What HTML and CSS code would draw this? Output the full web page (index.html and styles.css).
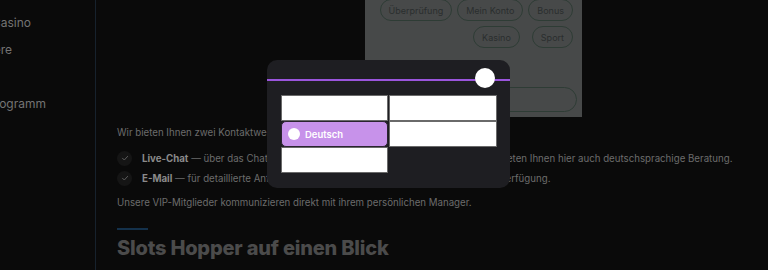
FILE: index.html
```html
<!DOCTYPE html>
<html lang="de">
<head>
<meta charset="utf-8">
<title>Slots Hopper</title>
<link rel="stylesheet" href="styles.css">
</head>
<body>
<div class="page">
  <aside class="sidebar">
    <ul class="nav">
      <li class="nav-item n1">Casino</li>
      <li class="nav-item n2">Turniere</li>
      <li class="nav-item n3">VIP</li>
      <li class="nav-item n4">Treueprogramm</li>
    </ul>
  </aside>
  <main class="main">
    <div class="top">
      <div class="panel">
        <div class="pill-row">
          <span class="pill">Überprüfung</span>
          <span class="pill">Mein Konto</span>
          <span class="pill">Bonus</span>
        </div>
        <div class="pill-row row2">
          <span class="pill">Kasino</span>
          <span class="pill">Sport</span>
        </div>
        <div class="search"></div>
      </div>
    </div>
    <section class="content">
      <p class="intro">Wir bieten Ihnen zwei Kontaktwege an, die beide auf Deutsch verfügbar sind:</p>
      <ul class="checks">
        <li><span class="check"><svg viewBox="0 0 14 14" width="14" height="14"><path d="M4.5 7.2l1.8 1.8 3.3-3.6" fill="none" stroke="#5c5c5c" stroke-width="1" stroke-linecap="round" stroke-linejoin="round"/></svg></span><span><b>Live-Chat</b> — über das Chat-Fenster rund um die Uhr; die Support-Mitarbeiter bieten Ihnen hier auch deutschsprachige Beratung.</span></li>
        <li><span class="check"><svg viewBox="0 0 14 14" width="14" height="14"><path d="M4.5 7.2l1.8 1.8 3.3-3.6" fill="none" stroke="#5c5c5c" stroke-width="1" stroke-linecap="round" stroke-linejoin="round"/></svg></span><span><b>E-Mail</b> — für detaillierte Anfragen steht Ihnen das Support-Team jederzeit zur Verfügung.</span></li>
      </ul>
      <p class="vip">Unsere VIP-Mitglieder kommunizieren direkt mit ihrem persönlichen Manager.</p>
      <div class="rule"></div>
      <h2 class="heading">Slots Hopper auf einen Blick</h2>
    </section>
  </main>
</div>
<div class="modal">
  <div class="modal-head">
    <span class="knob"></span>
  </div>
  <div class="lang-grid">
    <div class="cell"></div>
    <div class="cell"></div>
    <div class="cell active"><span class="dot"></span>Deutsch</div>
    <div class="cell"></div>
    <div class="cell"></div>
  </div>
</div>
</body>
</html>
```

FILE: styles.css
```css
* { box-sizing: border-box; }
html, body { margin: 0; padding: 0; }
body {
  background: #0a0a0a;
  font-family: Inter, "Noto Sans", sans-serif;
  width: 768px;
  height: 270px;
  overflow: hidden;
  position: relative;
}
.page { display: flex; height: 270px; }
.sidebar {
  width: 96px;
  flex: none;
  border-right: 1px solid #17222d;
  overflow: hidden;
}
.nav { list-style: none; margin: 0; padding: 9px 0 0 0; }
.nav-item {
  height: 27px;
  line-height: 27px;
  font-size: 12px;
  color: #747474;
  white-space: nowrap;
}
.n1 { margin-left: -8px; }
.n2 { margin-left: -35px; }
.n3 { margin-left: -40px; }
.n4 { margin-left: -45px; }

.main { flex: 1; min-width: 0; }
.top { height: 117px; padding-left: 269px; }
.panel {
  width: 217px;
  height: 117px;
  background: #474949;
  padding: 0 9px 0 0;
  display: flex;
  flex-direction: column;
  align-items: flex-end;
}
.pill-row { display: flex; gap: 5px; justify-content: flex-end; }
.row2 { margin-top: 5px; gap: 12px; }
.pill {
  display: inline-flex;
  align-items: center;
  white-space: nowrap;
  height: 22px;
  padding: 0 8px;
  border: 1px solid #2e3c35;
  border-radius: 11px;
  font-size: 9px;
  color: #2a2e2e;
}
.pill-row:first-child .pill { margin-top: -1px; }
.search {
  margin-top: 39px;
  margin-right: -4px;
  width: 205px;
  height: 25px;
  border: 1px solid #2e3c35;
  border-radius: 13px;
}

.content { padding: 6px 20px 0 21px; color: #6c6c6c; font-size: 9.7px; }
.intro { margin: 0; line-height: 20px; }
.checks { list-style: none; margin: 5px 0 0 0; padding: 0; }
.checks li { display: flex; align-items: center; gap: 10px; height: 20px; white-space: nowrap; }
.checks b { color: #8a8a8a; font-weight: 700; }
.check {
  width: 15px; height: 15px; border-radius: 50%;
  background: #151515;
  display: inline-flex; align-items: center; justify-content: center;
  flex: none;
}
.vip { margin: 5px 0 0 0; line-height: 20px; }
.rule { width: 31px; height: 2px; background: #14314b; margin-top: 15px; }
.heading {
  margin: 5px 0 0 0;
  font-size: 20px;
  line-height: 26px;
  font-weight: 800;
  color: #4b4b4b;
  letter-spacing: -0.2px;
}

.modal {
  position: absolute;
  left: 267px;
  top: 60px;
  width: 243px;
  height: 128px;
  background: #1e1e22;
  border-radius: 10px;
}
.modal-head {
  height: 21px;
  border-bottom: 2px solid #9a55dc;
  position: relative;
}
.knob {
  position: absolute;
  right: 15px;
  top: 8px;
  width: 20px;
  height: 20px;
  border-radius: 50%;
  background: #ffffff;
}
.lang-grid {
  display: grid;
  grid-template-columns: 107px 108px;
  grid-auto-rows: 26px;
  column-gap: 1px;
  row-gap: 0;
  padding: 14px 14px 0 14px;
}
.cell {
  background: #ffffff;
  border: 1px solid #6a6a6a;
}
.cell.active {
  background: #c792ea;
  border: 1px solid #2a2430;
  border-radius: 5px;
  display: flex;
  align-items: center;
  gap: 5px;
  padding-left: 6px;
  color: #ffffff;
  font-size: 9.5px;
  font-weight: 600;
}
.dot {
  width: 12px; height: 12px; border-radius: 50%;
  background: #ffffff;
  flex: none;
}
```
